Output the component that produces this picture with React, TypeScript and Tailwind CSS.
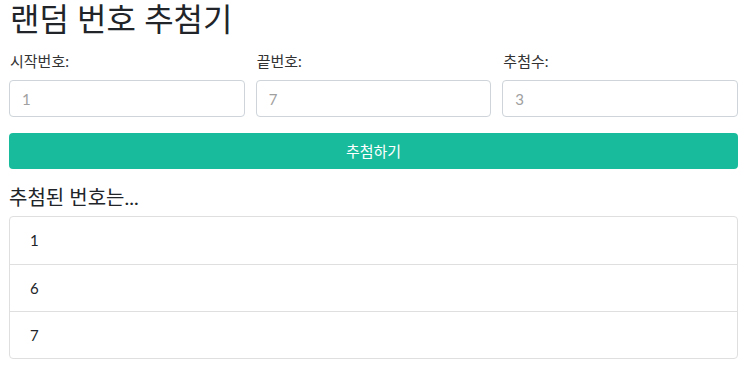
const font = "font-['Lato','Noto_Sans_CJK_KR',sans-serif]";

export default function App() {
  const drawn = [1, 6, 7];
  return (
    <div className={`${font} pl-[9px] pr-[14px] text-[#212529] bg-white`}>
      <h2 className="text-[32px] leading-[38px] font-normal mb-[12px] pl-[1px]">랜덤 번호 추첨기</h2>

      <div className="grid grid-cols-3 gap-[11px]">
        <Field label="시작번호:" placeholder="1" />
        <Field label="끝번호:" placeholder="7" />
        <Field label="추첨수:" placeholder="3" />
      </div>

      <button className="mt-[16px] w-full h-[36px] rounded-[4px] bg-[#18bc9c] text-white text-[15px] leading-[22px]">
        추첨하기
      </button>

      <h5 className="mt-[16px] mb-[7px] text-[20px] leading-[24px]">추첨된 번호는...</h5>

      <ul className="border border-[#dfdfdf] rounded-[4px]">
        {drawn.map((n, i) => (
          <li
            key={n}
            className={`h-[47px] flex items-center px-[20px] text-[15px] ${i > 0 ? "border-t border-[#dfdfdf]" : ""}`}
          >
            {n}
          </li>
        ))}
      </ul>
    </div>
  );
}

function Field({ label, placeholder }: { label: string; placeholder: string }) {
  return (
    <div>
      <label className="block text-[15px] leading-[22px] mb-[8px] pl-[1px] text-[#333]">{label}</label>
      <input
        placeholder={placeholder}
        className="block w-full h-[37px] px-[12px] text-[15px] border border-[#ced4da] rounded-[4px] placeholder:text-[#a0a0a0] outline-none"
      />
    </div>
  );
}
